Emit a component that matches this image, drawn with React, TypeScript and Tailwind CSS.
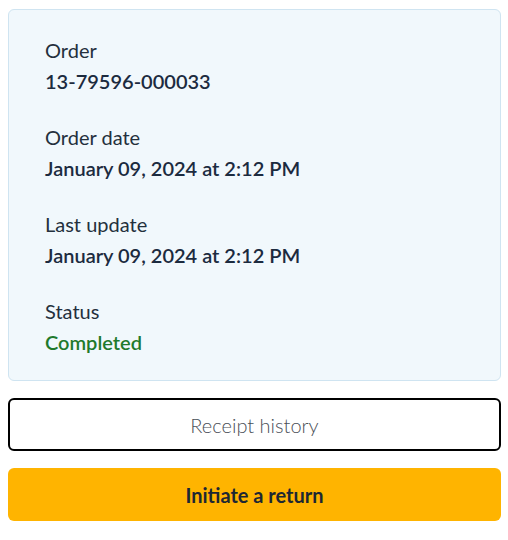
import React from 'react';

interface Field {
  label: string;
  value: string;
  tone?: 'ok';
}

const fields: Field[] = [
  { label: 'Order', value: '13-79596-000033' },
  { label: 'Order date', value: 'January 09, 2024 at 2:12 PM' },
  { label: 'Last update', value: 'January 09, 2024 at 2:12 PM' },
  { label: 'Status', value: 'Completed', tone: 'ok' },
];

const App = () => {
  return (
    <div className="flex flex-col pt-[9px] pl-2 pr-[7px] font-['Lato','Noto_Sans',sans-serif]">
      <div className="flex flex-col gap-[30px] rounded-md border border-[#cfe4f1] bg-[#f1f8fc] px-9 pt-[27px] pb-[25px]">
        {fields.map((f) => (
          <div key={f.label} className="flex flex-col gap-[5px]">
            <span className="text-[20px] leading-[26px] text-[#24303d]">{f.label}</span>
            <span
              className={
                f.tone === 'ok'
                  ? 'text-[20px] leading-[26px] font-semibold text-[#1f7a2c]'
                  : 'text-[20px] leading-[26px] font-semibold text-[#1c2b3f]'
              }
            >
              {f.value}
            </span>
          </div>
        ))}
      </div>
      <button className="mt-[17px] flex h-[53px] items-center justify-center rounded-md border-2 border-black bg-white text-[20px] font-light text-[#4a4f57]">
        Receipt history
      </button>
      <button className="mt-[17px] flex h-[53px] items-center justify-center rounded-md bg-[#ffb400] text-[20px] font-bold text-[#1d2733]">
        Initiate a return
      </button>
    </div>
  );
};

export default App;
